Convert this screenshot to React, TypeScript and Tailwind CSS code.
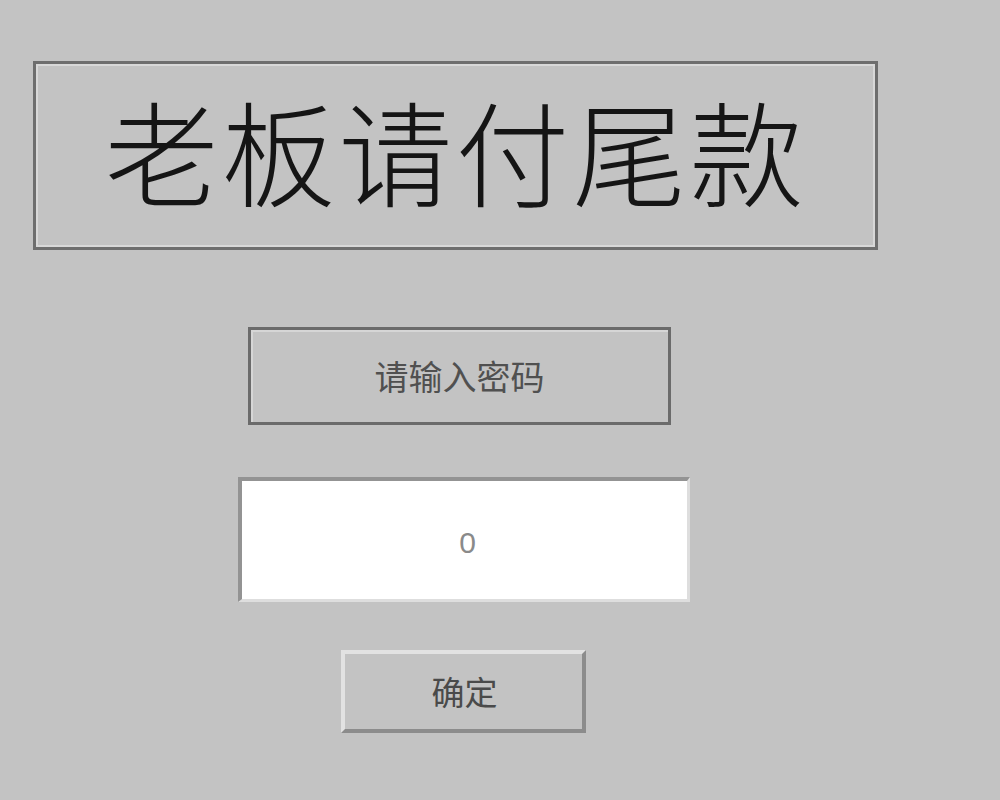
const cjk = { fontFamily: '"Noto Sans CJK SC", "Noto Sans", sans-serif' };

export default function App() {
  return (
    <div className="min-h-[800px] w-[1000px] bg-[#c3c3c3] pt-[61px]" style={cjk}>
      {/* title frame */}
      <div className="ml-[33px] flex h-[189px] w-[845px] items-center justify-center border-[3px] border-[#6e6e6e] shadow-[inset_2px_2px_0_#d8d8d8,inset_-2px_-2px_0_#d8d8d8]">
        <span className="pb-[14px] text-[114px] font-light leading-none tracking-[3px] text-[#151515]">
          老板请付尾款
        </span>
      </div>

      {/* label */}
      <div className="ml-[248px] mt-[77px] flex h-[98px] w-[423px] items-center justify-center border-[3px] border-[#6b6b6b] shadow-[inset_2px_2px_0_#d6d6d6]">
        <span className="text-[34px] leading-none text-[#505050]">请输入密码</span>
      </div>

      {/* input */}
      <div className="ml-[238px] mt-[52px] flex h-[125px] w-[452px] items-center justify-center border-t-[4px] border-l-[4px] border-r-[3px] border-b-[3px] border-t-[#939393] border-l-[#939393] border-r-[#dedede] border-b-[#dedede] bg-white">
        <span className="pl-[6px] pt-[6px] text-[30px] leading-none text-[#8a8a8a]" style={{ fontFamily: '"Liberation Sans", sans-serif' }}>
          0
        </span>
      </div>

      {/* button */}
      <div className="ml-[341px] mt-[48px] flex h-[83px] w-[245px] items-center justify-center border-t-[4px] border-l-[4px] border-r-[4px] border-b-[4px] border-t-[#e2e2e2] border-l-[#e2e2e2] border-r-[#8c8c8c] border-b-[#8c8c8c]">
        <span className="pl-[2px] text-[33px] leading-none text-[#4a4a4a]">确定</span>
      </div>
    </div>
  );
}
